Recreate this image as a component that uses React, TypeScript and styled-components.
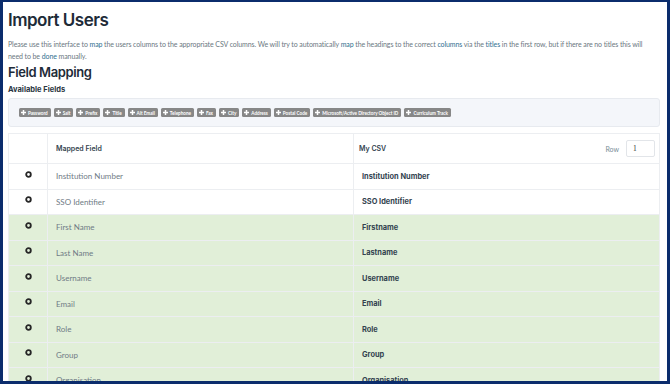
import React from 'react';
import styled, { createGlobalStyle } from 'styled-components';

const GlobalStyle = createGlobalStyle`
  html, body {
    margin: 0;
    padding: 0;
    background: #0b2c6c;
    overflow: hidden;
  }
  * { box-sizing: border-box; }
`;

const Frame = styled.div`
  width: 670px;
  height: 384px;
  border: 3px solid #0b2c6c;
  border-top-width: 2px;
  background: #ffffff;
  overflow: hidden;
`;

const Page = styled.div`
  padding: 7px 7px 0 5px;
  font-family: 'Lato', 'Liberation Sans', sans-serif;
`;

const Title = styled.h1`
  margin: 0 0 7px 0;
  font-family: 'Inter', 'Liberation Sans', sans-serif;
  font-weight: 600;
  font-size: 17px;
  line-height: 22px;
  color: #1e2b38;
  letter-spacing: -0.5px;
`;

const Intro = styled.p`
  margin: 0 0 1px 0;
  font-size: 7px;
  line-height: 12px;
  letter-spacing: -0.09px;
  color: #6b7781;
`;

const Link = styled.span`
  color: #2f6f8f;
`;

const SubTitle = styled.h2`
  margin: 0 0 4px 0;
  font-family: 'Inter', 'Liberation Sans', sans-serif;
  font-weight: 600;
  font-size: 13px;
  line-height: 18px;
  letter-spacing: -0.4px;
  color: #1e2b38;
`;

const Label = styled.h3`
  margin: 0 0 3px 0;
  font-family: 'Inter', 'Liberation Sans', sans-serif;
  font-weight: 700;
  font-size: 7.5px;
  line-height: 10px;
  color: #2a3642;
`;

const FieldsBox = styled.div`
  display: flex;
  flex-wrap: wrap;
  gap: 3px;
  padding: 9px 10px;
  margin-bottom: 6px;
  background: #f4f6fa;
  border: 1px solid #e7eaef;
  border-radius: 3px;
`;

const Chip = styled.span`
  display: inline-flex;
  align-items: center;
  gap: 2px;
  height: 9px;
  padding: 0 3px 0 2px;
  background: #878787;
  border-radius: 1.5px;
  color: #ffffff;
  font-family: 'Lato', 'Liberation Sans', sans-serif;
  font-weight: 700;
  font-size: 4.6px;
  white-space: nowrap;
`;

const Table = styled.table`
  width: 652px;
  border-collapse: collapse;
  table-layout: fixed;
  border: 1px solid #eceef1;
`;

const HeadCell = styled.th<{ inset?: number }>`
  height: 30px;
  padding: 0 4px 0 ${({ inset }) => inset ?? 8}px;
  text-align: left;
  font-family: 'Inter', 'Liberation Sans', sans-serif;
  font-weight: 600;
  font-size: 7px;
  color: #34444f;
  border-left: 1px solid #eceef1;
  border-bottom: 1px solid #eceef1;
`;

const HeadInner = styled.div`
  display: flex;
  align-items: center;
  justify-content: space-between;
`;

const RowPicker = styled.div`
  display: flex;
  align-items: center;
  gap: 7px;
  font-family: 'Lato', 'Liberation Sans', sans-serif;
  font-weight: 400;
  font-size: 7px;
  color: #7a8e98;
`;

const RowInput = styled.div`
  width: 29px;
  height: 17px;
  padding: 3px 6px;
  border: 1px solid #e2e5e9;
  border-radius: 2px;
  background: #ffffff;
  font-family: 'Liberation Serif', serif;
  font-size: 7.5px;
  color: #333;
`;

const BodyRow = styled.tr<{ matched: boolean }>`
  height: 25.5px;
  background: ${({ matched }) => (matched ? '#e1efd8' : '#ffffff')};
`;

const Cell = styled.td<{ strong?: boolean }>`
  padding: 0 8px;
  border-left: 1px solid #eceef1;
  border-top: 1px solid #eceef1;
  font-family: ${({ strong }) =>
    strong ? "'Inter', 'Liberation Sans', sans-serif" : "'Lato', 'Liberation Sans', sans-serif"};
  font-weight: ${({ strong }) => (strong ? 700 : 400)};
  font-size: ${({ strong }) => (strong ? '7.4px' : '8px')};
  color: ${({ strong }) => (strong ? '#33434f' : '#6f7b85')};
  vertical-align: middle;
`;

const IconCell = styled(Cell)`
  text-align: center;
  padding: 0;
  padding-bottom: 3px;
`;

const PlusIcon = () => (
  <svg width="5" height="5" viewBox="0 0 10 10">
    <path d="M3.5 0h3v3.5H10v3H6.5V10h-3V6.5H0v-3h3.5z" fill="#ffffff" />
  </svg>
);

const RingIcon = () => (
  <svg width="7" height="7" viewBox="0 0 10 10" style={{ display: 'inline-block' }}>
    <circle cx="5" cy="5" r="3.3" fill="none" stroke="#262626" strokeWidth="2.6" />
  </svg>
);

const availableFields = [
  'Password',
  'Salt',
  'Prefix',
  'Title',
  'Alt Email',
  'Telephone',
  'Fax',
  'City',
  'Address',
  'Postal Code',
  'Microsoft/Active Directory Object ID',
  'Curriculum Track',
];

const mappings = [
  { field: 'Institution Number', csv: 'Institution Number', matched: false },
  { field: 'SSO Identifier', csv: 'SSO Identifier', matched: false },
  { field: 'First Name', csv: 'Firstname', matched: true },
  { field: 'Last Name', csv: 'Lastname', matched: true },
  { field: 'Username', csv: 'Username', matched: true },
  { field: 'Email', csv: 'Email', matched: true },
  { field: 'Role', csv: 'Role', matched: true },
  { field: 'Group', csv: 'Group', matched: true },
  { field: 'Organisation', csv: 'Organisation', matched: true },
];

export default function App() {
  return (
    <>
      <GlobalStyle />
      <Frame>
        <Page>
          <Title>Import Users</Title>
          <Intro>
            Please use this interface to <Link>map</Link> the users columns to the appropriate CSV columns. We will try to
            automatically <Link>map</Link> the headings to the correct <Link>columns</Link> via the <Link>titles</Link> in
            the first row, but if there are no titles this will
            <br />
            need to be <Link>done</Link> manually.
          </Intro>
          <SubTitle>Field Mapping</SubTitle>
          <Label>Available Fields</Label>
          <FieldsBox>
            {availableFields.map((f) => (
              <Chip key={f}>
                <PlusIcon />
                {f}
              </Chip>
            ))}
          </FieldsBox>
          <Table>
            <colgroup>
              <col style={{ width: 39 }} />
              <col style={{ width: 306 }} />
              <col />
            </colgroup>
            <thead>
              <tr>
                <HeadCell />
                <HeadCell>
                  <HeadInner>Mapped Field</HeadInner>
                </HeadCell>
                <HeadCell inset={5}>
                  <HeadInner>
                    My CSV
                    <RowPicker>
                      Row
                      <RowInput>1</RowInput>
                    </RowPicker>
                  </HeadInner>
                </HeadCell>
              </tr>
            </thead>
            <tbody>
              {mappings.map((m) => (
                <BodyRow key={m.field} matched={m.matched}>
                  <IconCell>
                    <RingIcon />
                  </IconCell>
                  <Cell>{m.field}</Cell>
                  <Cell strong>{m.csv}</Cell>
                </BodyRow>
              ))}
            </tbody>
          </Table>
        </Page>
      </Frame>
    </>
  );
}
